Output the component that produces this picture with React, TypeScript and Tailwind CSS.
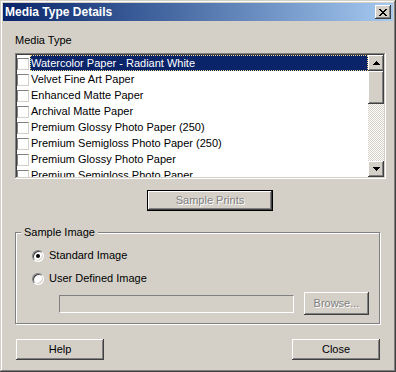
import React from "react";

const items = [
  "Watercolor Paper - Radiant White",
  "Velvet Fine Art Paper",
  "Enhanced Matte Paper",
  "Archival Matte Paper",
  "Premium Glossy Photo Paper (250)",
  "Premium Semigloss Photo Paper (250)",
  "Premium Glossy Photo Paper",
  "Premium Semigloss Photo Paper",
];

const raised =
  "shadow-[inset_-1px_-1px_#404040,inset_1px_1px_#ffffff,inset_-2px_-2px_#808080,inset_2px_2px_#d4d0c8]";
const sunken =
  "shadow-[inset_-1px_-1px_#ffffff,inset_1px_1px_#808080,inset_-2px_-2px_#d4d0c8,inset_2px_2px_#404040]";
const disabledText = "text-[#808080] [text-shadow:1px_1px_#ffffff]";

export default function App() {
  return (
    <div className="flex h-[372px] w-[396px] flex-col bg-[#d4d0c8] p-[3px] font-['Liberation_Sans',Arial,sans-serif] text-[11px] leading-[13px] text-black shadow-[inset_-1px_-1px_#404040,inset_1px_1px_#d4d0c8,inset_-2px_-2px_#808080,inset_2px_2px_#ffffff]">
      {/* title bar */}
      <div className="flex h-[18px] shrink-0 items-center justify-between bg-linear-to-r from-[#0a246a] to-[#a6caf0] pl-[2px] pr-[2px]">
        <span className="text-[12px] font-bold leading-[14px] text-white">Media Type Details</span>
        <button className={`grid h-[14px] w-[16px] place-items-center bg-[#d4d0c8] ${raised}`}>
          <CloseGlyph />
        </button>
      </div>

      <div className="flex flex-col items-start pl-[12px]">
        <p className="mt-[13px]">Media Type</p>

        {/* list box */}
        <div className={`mt-[6px] flex h-[126px] w-[371px] bg-white p-[2px] ${sunken}`}>
          <div className="flex-1 overflow-hidden">
            {items.map((label, i) => (
              <ListRow key={label} label={label} selected={i === 0} />
            ))}
          </div>
          <ScrollBar />
        </div>

        {/* default, disabled */}
        <div className="ml-[132px] mt-[11px] h-[21px] w-[126px] border border-black">
          <div className={`grid h-full w-full place-items-center ${raised} ${disabledText}`}>
            Sample Prints
          </div>
        </div>

        <fieldset className="mt-[15px] w-[365px] border border-[#808080] pb-[8px] shadow-[inset_1px_1px_#ffffff,1px_1px_#ffffff]">
          <legend className="ml-[5px] bg-[#d4d0c8] pl-[3px] pr-[3px]">Sample Image</legend>
          <div className="flex flex-col pl-[16px]">
            <label className="mt-[10px] flex h-[13px] items-center gap-[5px]">
              <Radio checked />
              <span>Standard Image</span>
            </label>
            <label className="mt-[10px] flex h-[13px] items-center gap-[5px]">
              <Radio />
              <span>User Defined Image</span>
            </label>
            <div className="ml-[27px] mt-[7px] flex h-[23px] items-center gap-[10px]">
              <div className="h-[18px] w-[235px] border border-b-white border-l-[#808080] border-r-white border-t-[#808080] bg-[#d4d0c8]" />
              <div className={`grid h-[23px] w-[65px] place-items-center ${raised} ${disabledText}`}>
                Browse...
              </div>
            </div>
          </div>
        </fieldset>

        <div className="ml-[1px] mt-[15px] flex w-[364px] justify-between">
          <button className={`h-[21px] w-[88px] ${raised}`}>Help</button>
          <button className={`h-[21px] w-[88px] ${raised}`}>Close</button>
        </div>
      </div>
    </div>
  );
}

function ListRow({ label, selected }: { label: string; selected?: boolean }) {
  return (
    <div className="flex h-[16px] shrink-0">
      <div className="w-[13px] shrink-0 pt-[3px]">
        <div className="h-[12px] w-[12px] border border-b-[#d4d0c8] border-l-[#808080] border-r-[#d4d0c8] border-t-[#808080] bg-white" />
      </div>
      <div
        className={
          selected
            ? "flex flex-1 items-center border border-dotted border-[#f0d78c] bg-[#0a246a] text-white"
            : "flex flex-1 items-center pl-[1px] whitespace-nowrap"
        }
      >
        {label}
      </div>
    </div>
  );
}

function ScrollBar() {
  return (
    <div className="flex w-[16px] shrink-0 flex-col">
      <div className={`grid h-[16px] place-items-center bg-[#d4d0c8] ${raised}`}>
        <Arrow />
      </div>
      <div className={`h-[33px] bg-[#d4d0c8] ${raised}`} />
      <div className="flex-1 bg-[repeating-conic-gradient(#ffffff_0%_25%,#d4d0c8_0%_50%)] bg-[length:2px_2px]" />
      <div className={`grid h-[16px] place-items-center bg-[#d4d0c8] ${raised}`}>
        <Arrow down />
      </div>
    </div>
  );
}

function Arrow({ down }: { down?: boolean }) {
  return (
    <svg width="7" height="4" viewBox="0 0 7 4" shapeRendering="crispEdges" className={down ? "rotate-180" : ""}>
      <rect x="3" y="0" width="1" height="1" fill="#000" />
      <rect x="2" y="1" width="3" height="1" fill="#000" />
      <rect x="1" y="2" width="5" height="1" fill="#000" />
      <rect x="0" y="3" width="7" height="1" fill="#000" />
    </svg>
  );
}

function CloseGlyph() {
  const rows = ["xx....xx", ".xx..xx.", "..xxxx..", "...xx...", "..xxxx..", ".xx..xx.", "xx....xx"];
  return (
    <svg width="8" height="7" viewBox="0 0 8 7" shapeRendering="crispEdges">
      {rows.flatMap((r, y) =>
        r.split("").map((c, x) => (c === "x" ? <rect key={`${x}-${y}`} x={x} y={y} width="1" height="1" fill="#000" /> : null))
      )}
    </svg>
  );
}

function Radio({ checked }: { checked?: boolean }) {
  return (
    <span className="relative grid h-[12px] w-[12px] shrink-0 place-items-center rounded-full border border-b-white border-l-[#808080] border-r-white border-t-[#808080] bg-white shadow-[inset_1px_1px_#404040,inset_-1px_-1px_#d4d0c8]">
      {checked && <span className="h-[4px] w-[4px] rounded-full bg-black" />}
    </span>
  );
}
